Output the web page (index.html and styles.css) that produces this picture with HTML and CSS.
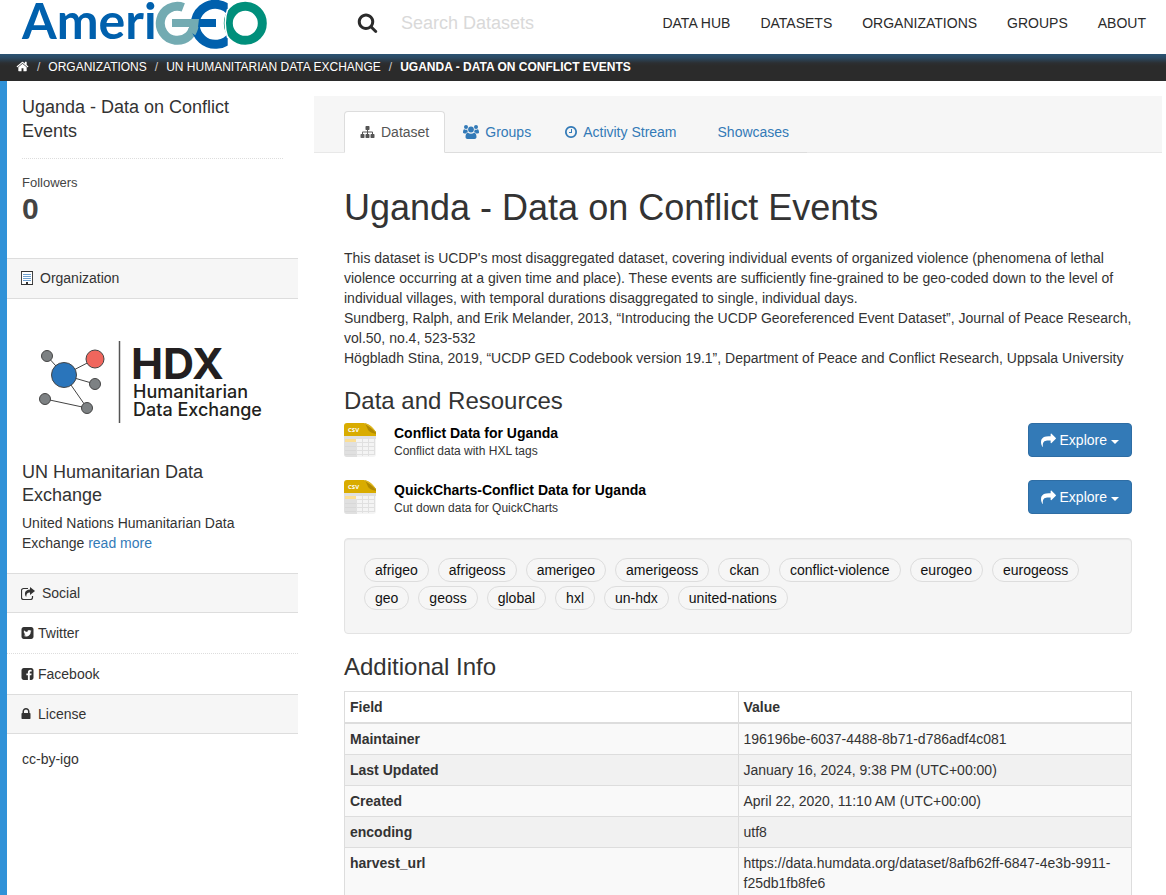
FILE: index.html
```html
<!DOCTYPE html>
<html lang="en">
<head>
<meta charset="utf-8">
<title>Uganda - Data on Conflict Events - AmeriGEO</title>
<link rel="stylesheet" href="styles.css">
</head>
<body>
<svg class="defs" aria-hidden="true">
  <symbol id="i-share" viewBox="0 0 1792 1792"><path d="M1792 640q0 26-19 45l-512 512q-19 19-45 19t-45-19-19-45v-256h-224q-98 0-175.500 6t-154 21.500-133 42.500-105.500 69.500-80 101-48.500 138.500-17.500 181q0 55 5 123 0 6 2.500 23.500t2.500 26.500q0 15-8.500 25t-23.500 10q-16 0-28-17-7-9-13-22t-13.500-30-10.500-24q-127-285-127-451 0-199 53-333 162-403 875-403h224v-256q0-26 19-45t45-19 45 19l512 512q19 19 19 45z"/></symbol>
  <symbol id="i-csv" viewBox="0 0 32 34">
    <path d="M0 12h32v19a3 3 0 0 1-3 3H3a3 3 0 0 1-3-3z" fill="#f4f4f4"/>
    <path d="M0 12h12v22H3a3 3 0 0 1-3-3z" fill="#e0e0e0"/>
    <path d="M12 13h20v3H12z" fill="#e0e0e0"/>
    <path d="M1 16h11v3H1z" fill="#fbdf95"/>
    <path d="M12.500 19v15M18.500 13v20M24.500 13v20M30.500 13v19M12 19.500h19M12 23.500h19M12 27.500h19M12 31.500h19" stroke="#e0e0e0" fill="none"/>
    <path d="M1 23.500h11M1 27.500h11M1 31.500h11" stroke="#d8d8d8" fill="none"/>
    <path d="M3 0h17l12 9v4H0V3a3 3 0 0 1 3-3z" fill="#d9ac00"/>
    <path d="M20 0c3 2 3 6 5 8 2 2 5 2 7 3V9C29 5 25 1 20 0z" fill="#b18a00"/>
    <path d="M20 0c6 1 10 5 12 10-4-5-8-7-12-10z" fill="#e0b820"/>
    <text x="4" y="9" class="csv-label">CSV</text>
  </symbol>
  <clipPath id="e-cut"><path d="M165 -2h42.700v56H165z"/></clipPath>
</svg>

<header class="masthead">
  <a class="logo" href="#" aria-label="AmeriGEO">
    <svg width="250" height="54" viewBox="0 0 250 54">
      <text x="2" y="39" class="logo-text">Ameri</text>
      <path d="M163.300 7.400A17 17 0 1 0 174.300 23.300" fill="none" stroke="#73abb2" stroke-width="9"/>
      <circle cx="225.300" cy="23.300" r="17" fill="none" stroke="#008f7b" stroke-width="9"/>
      <g clip-path="url(#e-cut)" fill="none">
        <path d="M212 13.300A20 20 0 1 0 212 35.300" stroke="#0060ad" stroke-width="9"/>
      </g>
      <path d="M207.700 9q-5 14 0 29" fill="none" stroke="#fff" stroke-width="1.500"/>
      <path d="M152 19h27v8h-27z" fill="#73abb2"/>
      <path d="M174.300 21v2.300A17 17 0 0 1 171.500 32.700" fill="none" stroke="#73abb2" stroke-width="9"/>
      <path d="M179 19h17v8h-18z" fill="#0060ad"/>
    </svg>
  </a>
  <form class="search">
    <button class="search-button" type="button" aria-label="Search">
      <svg width="21" height="21" viewBox="0 0 1792 1792"><path d="M1216 832q0-185-131.500-316.500t-316.500-131.500-316.500 131.500-131.500 316.500 131.500 316.500 316.500 131.500 316.500-131.500 131.500-316.500zm512 832q0 52-38 90t-90 38q-54 0-90-38l-343-342q-179 124-399 124-143 0-273.500-55.500t-225-150-150-225-55.500-273.500 55.500-273.500 150-225 225-150 273.500-55.500 273.500 55.500 225 150 150 225 55.500 273.500q0 220-124 399l343 343q37 37 37 90z"/></svg>
    </button>
    <input class="search-input" type="text" placeholder="Search Datasets" aria-label="Search Datasets">
  </form>
  <nav class="site-nav">
    <a href="#">Data Hub</a><a href="#">Datasets</a><a href="#">Organizations</a><a href="#">Groups</a><a href="#">About</a>
  </nav>
</header>

<nav class="toolbar" aria-label="Breadcrumb">
  <a href="#" aria-label="Home"><svg width="13" height="13" viewBox="0 0 1792 1792"><path d="M1472 992v480q0 26-19 45t-45 19h-384v-384h-256v384h-384q-26 0-45-19t-19-45v-480q0-1 .5-3t.5-3l575-474 575 474q1 2 1 6zm223-69l-62 74q-8 9-21 11h-3q-13 0-21-7l-692-577-692 577q-12 8-24 7-13-2-21-11l-62-74q-8-10-7-23.500t11-21.500l719-599q32-26 76-26t76 26l244 204v-195q0-14 9-23t23-9h192q14 0 23 9t9 23v408l219 182q10 8 11 21.500t-7 23.500z"/></svg></a>
  <span class="slash">/</span>
  <a href="#">Organizations</a>
  <span class="slash">/</span>
  <a href="#">UN Humanitarian Data Exchange</a>
  <span class="slash">/</span>
  <a href="#" class="current">Uganda - Data on Conflict Events</a>
</nav>

<div class="page">
  <aside class="sidebar">
    <section class="summary">
      <h2 class="side-title">Uganda - Data on Conflict Events</h2>
      <dl class="followers"><dt>Followers</dt><dd>0</dd></dl>
    </section>

    <h2 class="side-heading organization">
      <svg width="12" height="14" viewBox="0 0 12 14"><path d="M.5 .5h11v13H.5z" fill="#fff" stroke="#444"/><path d="M2 3.500h8M2 5.500h8M2 7.500h8M2 9.500h8" stroke="#6d9fce"/><path d="M0 0h12v1H0zM0 13h12v1H0zM5 11h2v3H5z" fill="#333"/></svg>
      Organization
    </h2>
    <section class="org">
      <a href="#" class="org-logo" aria-label="HDX Humanitarian Data Exchange">
        <svg viewBox="2 0 261 105">
          <g stroke="#444" stroke-width="1"><path d="M27 26l17 19M44 45l31-16M44 45l31 9M44 45l23 33M25 69l42 9" fill="none"/>
          <g fill="#7d8183"><circle cx="27" cy="26" r="5.500"/><circle cx="75" cy="54" r="5.500"/><circle cx="25" cy="69" r="5.500"/><circle cx="67" cy="78" r="5.500"/></g>
          <circle cx="44" cy="45" r="12.500" fill="#2a75bb"/><circle cx="75" cy="29" r="9" fill="#f0665d"/></g>
          <path d="M99.500 11v82" stroke="#555" stroke-width="1.500"/>
          <text x="111" y="49" class="hdx-big">HDX</text>
          <text x="113" y="68" class="hdx-small">Humanitarian</text>
          <text x="113" y="86" class="hdx-small">Data Exchange</text>
        </svg>
      </a>
      <h3 class="org-title">UN Humanitarian Data Exchange</h3>
      <p>United Nations Humanitarian Data Exchange <a href="#">read more</a></p>
    </section>

    <h2 class="side-heading">
      <svg width="14" height="13" viewBox="0 0 14 13"><path d="M7 1.500H2.500a2 2 0 0 0-2 2v7a2 2 0 0 0 2 2h7a2 2 0 0 0 2-2V9" fill="none" stroke="#333" stroke-width="1.200"/><path d="M9 0l5 4-5 4V5.600C6.500 5.500 5.500 6.500 5.200 10 2.500 6 4.500 2.500 9 2.400z" fill="#333"/></svg>
      Social
    </h2>
    <ul class="side-list">
      <li><a href="#"><svg width="14" height="14" viewBox="64 0 1792 1792"><path d="M1408 610q-56 25-121 34 68-40 93-117-65 38-134 51-61-66-153-66-87 0-148.500 61.500t-61.500 148.500q0 29 5 48-129-7-242-65t-192-155q-29 50-29 106 0 114 91 175-47-1-100-26v2q0 75 50 133.500t123 72.500q-29 8-51 8-13 0-39-4 21 63 74.500 104t121.500 42q-116 90-261 90-26 0-50-3 148 94 322 94 112 0 210-35.500t168-95 120.500-137 75-162 24.500-168.500q0-18-1-27 63-45 105-109zm256-194v960q0 119-84.500 203.500t-203.500 84.500h-960q-119 0-203.500-84.500t-84.500-203.500v-960q0-119 84.500-203.500t203.500-84.500h960q119 0 203.500 84.500t84.500 203.500z"/></svg>Twitter</a></li>
      <li><a href="#"><svg width="14" height="14" viewBox="64 0 1792 1792"><path d="M1376 128q119 0 203.500 84.500t84.500 203.500v960q0 119-84.500 203.500t-203.500 84.500h-188v-595h199l30-232h-229v-148q0-56 23.500-84t91.500-28l122-1v-207q-63-9-178-9-136 0-217.500 80t-81.500 226v171h-200v232h200v595h-532q-119 0-203.500-84.500t-84.500-203.500v-960q0-119 84.500-203.500t203.500-84.500h960z"/></svg>Facebook</a></li>
    </ul>

    <h2 class="side-heading">
      <svg width="10" height="14" viewBox="320 0 1152 1792"><path d="M640 768h512v-192q0-106-75-181t-181-75-181 75-75 181v192zm832 96v576q0 40-28 68t-68 28h-960q-40 0-68-28t-28-68v-576q0-40 28-68t68-28h32v-192q0-184 132-316t316-132 316 132 132 316v192h32q40 0 68 28t28 68z"/></svg>
      License
    </h2>
    <p class="license-name">cc-by-igo</p>
  </aside>

  <main class="primary">
    <header class="tabs-bar">
      <nav class="tabs">
        <a href="#" class="active"><svg width="15" height="14" viewBox="0 0 1792 1792"><path d="M1792 1248v320q0 40-28 68t-68 28h-320q-40 0-68-28t-28-68v-320q0-40 28-68t68-28h96v-192h-512v192h96q40 0 68 28t28 68v320q0 40-28 68t-68 28h-320q-40 0-68-28t-28-68v-320q0-40 28-68t68-28h96v-192h-512v192h96q40 0 68 28t28 68v320q0 40-28 68t-68 28h-320q-40 0-68-28t-28-68v-320q0-40 28-68t68-28h96v-192q0-52 38-90t90-38h512v-192h-96q-40 0-68-28t-28-68v-320q0-40 28-68t68-28h320q40 0 68 28t28 68v320q0 40-28 68t-68 28h-96v192h512q52 0 90 38t38 90v192h96q40 0 68 28t28 68z"/></svg>Dataset</a>
        <a href="#"><svg width="16" height="14" viewBox="0 0 16 14"><circle cx="3" cy="2" r="2"/><circle cx="13" cy="2" r="2"/><circle cx="8" cy="4.500" r="2.900"/><path d="M0 7.500C0 5.500 .4 4.200 1.400 4.200c.8.600 2 .8 3 .4C4.300 6 4.700 6.800 5.200 7.300c-1 0-1.900.4-2.400 1.100H1.500C.6 8.400 0 8.200 0 7.500zM16 7.500c0-2-.4-3.300-1.400-3.300-.8.600-2 .8-3 .4.100 1.400-.3 2.200-.8 2.700 1 0 1.900.4 2.400 1.100h1.300c.9 0 1.500-.2 1.500-.9zM2.500 12c0-2.500.8-4.300 2.500-4.300 1.700 1.300 4.300 1.300 6 0 1.700 0 2.500 1.800 2.500 4.300 0 1.300-.8 2-2 2h-7c-1.200 0-2-.7-2-2z"/></svg>Groups</a>
        <a href="#"><svg width="12" height="14" viewBox="128 0 1536 1792"><path d="M1024 544v448q0 14-9 23t-23 9h-320q-14 0-23-9t-9-23v-64q0-14 9-23t23-9h224v-352q0-14 9-23t23-9h64q14 0 23 9t9 23zm416 352q0-148-73-273t-198-198-273-73-273 73-198 198-73 273 73 273 198 198 273 73 273-73 198-198 73-273zm224 0q0 209-103 385.500t-279.500 279.500-385.500 103-385.500-103-279.500-279.500-103-385.500 103-385.500 279.500-279.500 385.500-103 385.500 103 279.500 279.500 103 385.500z"/></svg>Activity Stream</a>
        <a href="#" class="no-icon">Showcases</a>
      </nav>
    </header>

    <article class="content">
      <h1>Uganda - Data on Conflict Events</h1>
      <p>This dataset is UCDP's most disaggregated dataset, covering individual events of organized violence (phenomena of lethal violence occurring at a given time and place). These events are sufficiently fine-grained to be geo-coded down to the level of individual villages, with temporal durations disaggregated to single, individual days.<br>
      Sundberg, Ralph, and Erik Melander, 2013, “Introducing the UCDP Georeferenced Event Dataset”, Journal of Peace Research, vol.50, no.4, 523-532<br>
      Högbladh Stina, 2019, “UCDP GED Codebook version 19.1”, Department of Peace and Conflict Research, Uppsala University</p>

      <h2>Data and Resources</h2>
      <ul class="resources">
        <li>
          <svg width="32" height="34"><use href="#i-csv"/></svg>
          <div class="resource-text"><a href="#">Conflict Data for Uganda</a><p>Conflict data with HXL tags</p></div>
          <button type="button" class="explore"><svg width="15" height="15"><use href="#i-share"/></svg>Explore<span class="caret"></span></button>
        </li>
        <li>
          <svg width="32" height="34"><use href="#i-csv"/></svg>
          <div class="resource-text"><a href="#">QuickCharts-Conflict Data for Uganda</a><p>Cut down data for QuickCharts</p></div>
          <button type="button" class="explore"><svg width="15" height="15"><use href="#i-share"/></svg>Explore<span class="caret"></span></button>
        </li>
      </ul>

      <section class="tags">
        <a href="#">afrigeo</a><a href="#">afrigeoss</a><a href="#">amerigeo</a><a href="#">amerigeoss</a><a href="#">ckan</a><a href="#">conflict-violence</a><a href="#">eurogeo</a><a href="#">eurogeoss</a><a href="#">geo</a><a href="#">geoss</a><a href="#">global</a><a href="#">hxl</a><a href="#">un-hdx</a><a href="#">united-nations</a>
      </section>

      <h2>Additional Info</h2>
      <table class="info">
        <thead><tr><th scope="col">Field</th><th scope="col">Value</th></tr></thead>
        <tbody>
          <tr><th scope="row">Maintainer</th><td>196196be-6037-4488-8b71-d786adf4c081</td></tr>
          <tr><th scope="row">Last Updated</th><td>January 16, 2024, 9:38 PM (UTC+00:00)</td></tr>
          <tr><th scope="row">Created</th><td>April 22, 2020, 11:10 AM (UTC+00:00)</td></tr>
          <tr><th scope="row">encoding</th><td>utf8</td></tr>
          <tr><th scope="row">harvest_url</th><td>https://data.humdata.org/dataset/8afb62ff-6847-4e3b-9911-f25db1fb8fe6</td></tr>
        </tbody>
      </table>
    </article>
  </main>
</div>
</body>
</html>
```

FILE: styles.css
```css
* { box-sizing: border-box; }
html { overflow-x: hidden; scrollbar-width: none; }
body {
  margin: 0;
  font: 14px/20px "Liberation Sans", Arial, sans-serif;
  color: #333;
  background: #fff;
}
h1, h2, h3, p, ul, dl, dd { margin: 0; padding: 0; font-weight: 400; }
ul { list-style: none; }
a { color: #337ab7; text-decoration: none; }
svg { flex: none; fill: currentColor; }
.defs { position: absolute; width: 0; height: 0; }
.csv-label { font: 700 6px "Open Sans", sans-serif; fill: #fff; }

.masthead {
  display: flex;
  align-items: center;
  height: 54px;
  padding: 0 20px;
}
.logo { display: flex; }
.logo-text { font: 700 50px Lato, sans-serif; fill: #0060ad; }
.search { display: flex; align-items: center; flex: 1; min-width: 0; margin-left: 87px; padding-bottom: 8px; }
.search-button { display: flex; padding: 0 0 2px; border: 0; background: none; color: #2b2b2b; }
.search-input {
  flex: 1;
  min-width: 0;
  margin-left: 23px;
  padding: 0;
  border: 0;
  outline: 0;
  background: none;
  font: 18px/24px "Liberation Sans", Arial, sans-serif;
}
.search-input::placeholder { color: #d9d9d9; opacity: 1; }
.site-nav { display: flex; gap: 30px; padding-bottom: 8px; text-transform: uppercase; white-space: nowrap; }
.site-nav a { color: #2b2b2b; }

.toolbar {
  display: flex;
  align-items: center;
  height: 27px;
  padding: 0 16px 2px;
  background: linear-gradient(#2b5475, #2b4860 4px, #2c2f32 9px, #2b2b2b 12px);
  color: #fff;
  font-size: 12px;
  text-transform: uppercase;
  white-space: nowrap;
}
.toolbar a { display: flex; color: #fff; }
.toolbar .current { font-weight: 700; }
.slash { padding: 0 8px; color: #ccc; }

.page { display: flex; border-left: 7px solid #3092d8; }
.sidebar { flex: 0 0 291px; }
.summary { padding: 14px 15px 33px; }
.side-title { padding-bottom: 15px; border-bottom: 1px dotted #ddd; font-size: 18px; line-height: 24px; }
.followers { padding-top: 14px; color: #444; }
.followers dt { font-size: 13px; line-height: 20px; }
.followers dd { font-size: 30px; font-weight: 700; line-height: 32px; }
.side-heading {
  display: flex;
  align-items: center;
  gap: 7px;
  padding: 10px 14px;
  border: solid #ddd;
  border-width: 1px 0;
  background: #f6f6f6;
  font-size: 14px;
  line-height: 18px;
}
.organization { padding-bottom: 11px; }
.org { padding: 31px 15px 20px; }
.org-logo { display: block; margin: 0 0 26px; }
.org-logo svg { display: block; width: 100%; }
.hdx-big { font: 700 43px Inter, sans-serif; fill: #231f20; }
.hdx-small { font: 500 18px Inter, sans-serif; fill: #231f20; }
.org-title { margin-bottom: 6px; font-size: 18px; line-height: 23px; }
.side-list li + li { border-top: 1px dotted #ddd; }
.side-list a { display: flex; align-items: center; gap: 3px; padding: 10px 14px; color: #333; }
.license-name { padding: 15px; }

.primary { flex: 1; min-width: 0; margin: 15px 4px 0 16px; }
.tabs-bar { display: flex; padding: 15px 30px 0; border-bottom: 1px solid #e8e8e8; background: #f6f6f6; }
.tabs { display: flex; gap: 2px; margin-bottom: -1px; padding-right: 2px; border-bottom: 1px solid #ddd; }
.tabs a {
  display: flex;
  align-items: center;
  gap: 6px;
  margin-bottom: -1px;
  padding: 10px 15px;
  border: 1px solid transparent;
  border-radius: 4px 4px 0 0;
}
.tabs .active { border-color: #ddd #ddd #fff; background: #fff; color: #555; }
.tabs .no-icon { padding-left: 22px; }

.content { padding: 35px 30px 20px; }
h1 { margin-bottom: 20px; font-size: 36px; line-height: 40px; }
.content h2 { margin: 20px 0 9px; font-size: 24px; line-height: 26px; }
.resources { display: grid; gap: 23px; margin-bottom: 24px; }
.resources li { display: flex; align-items: center; }
.resource-text { flex: 1; margin: 4px 18px 0; line-height: 18px; }
.resource-text a { color: #000; font-weight: 700; }
.resource-text p { font-size: 12px; }
.resources li { height: 34px; }
.explore {
  display: flex;
  align-items: center;
  gap: 4px;
  height: 34px;
  padding: 0 12px;
  border: 1px solid #2e6da4;
  border-radius: 4px;
  background: #337ab7;
  color: #fff;
  font: 14px/20px "Liberation Sans", Arial, sans-serif;
}
.caret { margin-top: 3px; border: 4px solid transparent; border-top-color: #fff; border-bottom: 0; }
.tags {
  display: flex;
  flex-wrap: wrap;
  gap: 4px 9px;
  padding: 19px 19px 23px;
  border: 1px solid #e3e3e3;
  border-radius: 4px;
  background: #f5f5f5;
  box-shadow: inset 0 1px 1px rgba(0, 0, 0, .05);
}
.tags a { padding: 1px 10px; border: 1px solid #ddd; border-radius: 12px; background: #f6f6f6; color: #111; }
.info { width: 100%; margin-top: 11px; border-collapse: collapse; table-layout: fixed; }
.info th, .info td { padding: 5px; border: 1px solid #ddd; text-align: left; vertical-align: top; }
.info thead th { border-bottom-width: 2px; }
.info tbody tr:nth-child(odd) { background: #f9f9f9; }
.info tbody tr:nth-child(even) { background: #f1f1f1; }
```
